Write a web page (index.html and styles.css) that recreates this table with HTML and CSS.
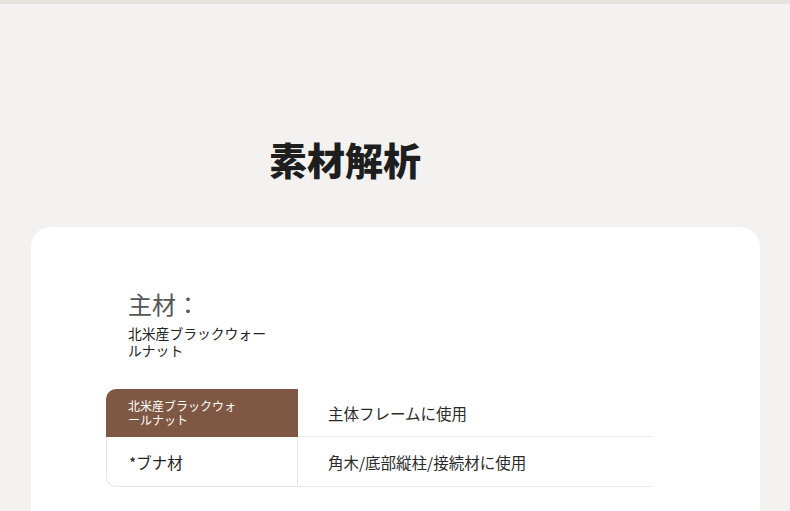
FILE: index.html
```html
<!DOCTYPE html>
<html lang="ja">
<head>
  <meta charset="UTF-8">
  <meta name="viewport" content="width=device-width, initial-scale=1.0">
  <title>素材解析</title>
  <link rel="stylesheet" href="styles.css">
</head>
<body>
  <div class="top-bar"></div>
  <h1 class="title">素材解析</h1>

  <div class="card">
    <div class="main-material">
      <h2>主材：</h2>
      <p>北米産ブラックウォー<br>ルナット</p>
    </div>

    <div class="material-table">
      <div class="cell name main">北米産ブラックウォ<br>ールナット</div>
      <div class="cell use">主体フレームに使用</div>
      <div class="cell name sub">*ブナ材</div>
      <div class="cell use">角木/底部縦柱/接続材に使用</div>
    </div>
  </div>
</body>
</html>
```

FILE: styles.css
```css
body {
  margin: 0;
  padding: 0;
  background: #f3f2f0;
  font-family: "Noto Sans CJK JP", "Noto Sans", sans-serif;
  color: #222;
  overflow: hidden;
}

.top-bar {
  height: 4px;
  background: #e5e3dc;
}

.title {
  margin: 0;
  padding: 123px 0 0 269px;
  font-size: 38px;
  line-height: 64px;
  font-weight: 900;
  color: #1e1e1e;
}

.card {
  margin: 36px 30px 0 31px;
  height: 280px;
  padding: 62px 0 0 75px;
  background: #fff;
  border-radius: 20px;
}

.main-material {
  padding-left: 22px;
}

.main-material h2 {
  margin: 0;
  font-size: 24px;
  line-height: 30px;
  font-weight: 400;
  color: #555;
}

.main-material p {
  margin: 6px 0 0;
  font-size: 13.8px;
  line-height: 17px;
  color: #222;
}

.material-table {
  margin-top: 30px;
  width: 546px;
  display: grid;
  grid-template-columns: 192px 1fr;
  grid-template-rows: 48px 50px;
}

.cell {
  display: flex;
  align-items: center;
}

.name {
  padding-left: 22px;
}

.name.main {
  background: #7e5843;
  color: #fff;
  font-size: 12px;
  line-height: 14px;
  border-radius: 10px 0 0 0;
}

.name.sub {
  font-size: 15.5px;
  color: #222;
  border: 1px solid #e6e6e6;
  border-top: none;
  border-radius: 0 0 0 10px;
}

.use {
  padding-left: 30px;
  font-size: 15.5px;
  color: #2a2a2a;
  border-bottom: 1px solid #ececec;
}
```
